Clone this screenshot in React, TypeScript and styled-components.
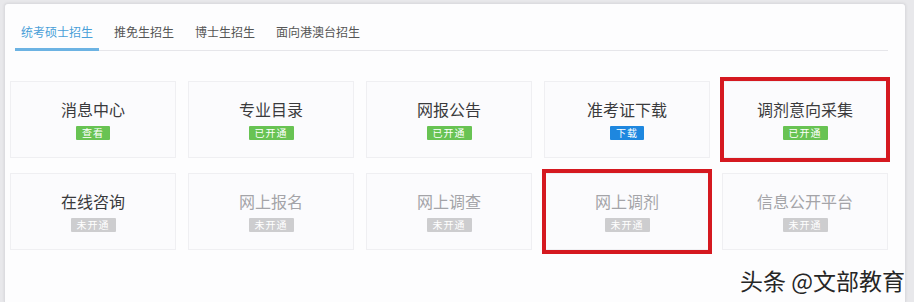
import styled, { createGlobalStyle } from "styled-components";

const GlobalStyle = createGlobalStyle`
  * {
    box-sizing: border-box;
    margin: 0;
    padding: 0;
  }
  html, body {
    width: 914px;
    height: 302px;
    overflow: hidden;
  }
  body {
    background-color: #e8e8eb;
    font-family: "Noto Sans CJK SC", "Noto Sans", sans-serif;
  }
`;

type BadgeKind = "green" | "blue" | "grey";

interface CardItem {
  title: string;
  badge: string;
  kind: BadgeKind;
  muted?: boolean;
  marked?: boolean;
}

const tabs = ["统考硕士招生", "推免生招生", "博士生招生", "面向港澳台招生"];

const cards: CardItem[] = [
  { title: "消息中心", badge: "查看", kind: "green" },
  { title: "专业目录", badge: "已开通", kind: "green" },
  { title: "网报公告", badge: "已开通", kind: "green" },
  { title: "准考证下载", badge: "下载", kind: "blue" },
  { title: "调剂意向采集", badge: "已开通", kind: "green", marked: true },
  { title: "在线咨询", badge: "未开通", kind: "grey" },
  { title: "网上报名", badge: "未开通", kind: "grey", muted: true },
  { title: "网上调查", badge: "未开通", kind: "grey", muted: true },
  { title: "网上调剂", badge: "未开通", kind: "grey", muted: true, marked: true },
  { title: "信息公开平台", badge: "未开通", kind: "grey", muted: true },
];

const badgeColors: Record<BadgeKind, string> = {
  green: "#68c353",
  blue: "#1e87df",
  grey: "#cdcdcf",
};

export default function App() {
  return (
    <>
      <GlobalStyle />
      <Page>
        <Panel>
          <TabBar>
            {tabs.map((t, i) => (
              <Tab key={t} active={i === 0}>
                {t}
              </Tab>
            ))}
          </TabBar>
          <Grid>
            {cards.map((c) => (
              <Card key={c.title} marked={c.marked}>
                <CardTitle muted={c.muted}>{c.title}</CardTitle>
                <Badge kind={c.kind}>{c.badge}</Badge>
              </Card>
            ))}
          </Grid>
        </Panel>
        <Watermark>头条 @文部教育</Watermark>
      </Page>
    </>
  );
}

const Page = styled.div`
  position: relative;
  width: 914px;
  height: 302px;
  padding: 3px 8px 0 4px;
`;

const Panel = styled.div`
  height: 100%;
  background-color: #fdfdfe;
  border: 1px solid #dcdce0;
  border-bottom: none;
  border-radius: 4px 4px 0 0;
  box-shadow: 0 0 3px rgba(0, 0, 0, 0.08);
  padding: 0 17px 0 5px;
`;

const TabBar = styled.div`
  display: flex;
  gap: 9px;
  margin: 0 0 0 5px;
  padding-top: 17px;
  border-bottom: 1px solid #e6e6ea;
`;

const Tab = styled.div<{ active?: boolean }>`
  padding: 0 6px;
  height: 30px;
  line-height: 22px;
  font-size: 12px;
  color: ${(p) => (p.active ? "#4a9fd8" : "#555")};
  border-bottom: 3px solid ${(p) => (p.active ? "#6cb3e3" : "transparent")};
  margin-bottom: -1px;
`;

const Grid = styled.div`
  display: grid;
  grid-template-columns: repeat(5, 166px);
  gap: 15px 12px;
  margin-top: 30px;
`;

const Card = styled.div<{ marked?: boolean }>`
  position: relative;
  height: 77px;
  background-color: #fbfbfd;
  border: 1px solid #efeff2;
  display: flex;
  flex-direction: column;
  align-items: center;
  padding-top: 15px;
  gap: 5px;

  &::after {
    content: "";
    display: ${(p) => (p.marked ? "block" : "none")};
    position: absolute;
    top: -5px;
    bottom: -5px;
    left: -3px;
    right: -3px;
    border: 4px solid #d51920;
  }
`;

const CardTitle = styled.div<{ muted?: boolean }>`
  font-size: 16px;
  line-height: 24px;
  color: ${(p) => (p.muted ? "#a4a4a8" : "#3a3a3c")};
`;

const Badge = styled.span<{ kind: BadgeKind }>`
  display: inline-block;
  height: 14px;
  line-height: 14px;
  padding: 0 6px;
  font-size: 10px;
  letter-spacing: 1px;
  color: #fff;
  border-radius: 1px;
  background-color: ${(p) => badgeColors[p.kind]};
`;

const Watermark = styled.div`
  position: absolute;
  right: 9px;
  bottom: 8px;
  font-size: 23px;
  line-height: 28px;
  color: #262626;
  text-shadow: 0 0 2px #fff, 0 0 2px #fff;
`;
